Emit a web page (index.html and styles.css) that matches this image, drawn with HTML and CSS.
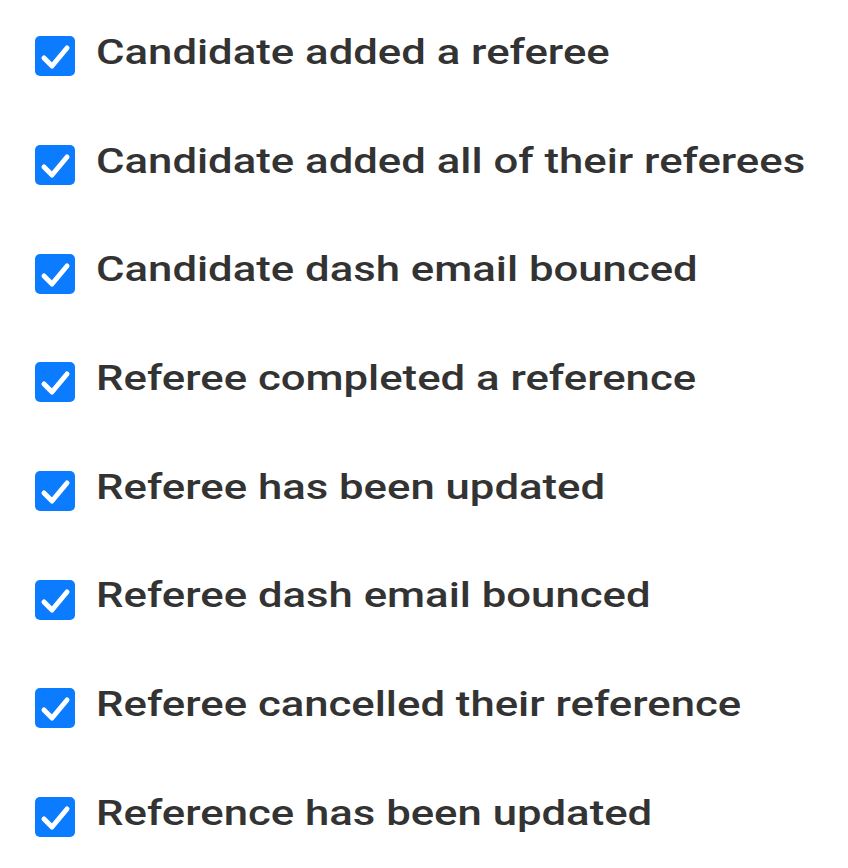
FILE: index.html
```html
<!DOCTYPE html>
<html lang="en">
  <head>
    <meta charset="UTF-8" />
    <title>Notification settings</title>
    <link rel="stylesheet" href="styles.css">
  </head>
  <body>
    <ul class="events">
      <li class="event">
        <span class="check"><svg viewBox="0 0 40 40"><path d="M9 22 L17 30 L32 12" /></svg></span>
        <span class="label">Candidate added a referee</span>
      </li>
      <li class="event">
        <span class="check"><svg viewBox="0 0 40 40"><path d="M9 22 L17 30 L32 12" /></svg></span>
        <span class="label">Candidate added all of their referees</span>
      </li>
      <li class="event">
        <span class="check"><svg viewBox="0 0 40 40"><path d="M9 22 L17 30 L32 12" /></svg></span>
        <span class="label">Candidate dash email bounced</span>
      </li>
      <li class="event">
        <span class="check"><svg viewBox="0 0 40 40"><path d="M9 22 L17 30 L32 12" /></svg></span>
        <span class="label">Referee completed a reference</span>
      </li>
      <li class="event">
        <span class="check"><svg viewBox="0 0 40 40"><path d="M9 22 L17 30 L32 12" /></svg></span>
        <span class="label">Referee has been updated</span>
      </li>
      <li class="event">
        <span class="check"><svg viewBox="0 0 40 40"><path d="M9 22 L17 30 L32 12" /></svg></span>
        <span class="label">Referee dash email bounced</span>
      </li>
      <li class="event">
        <span class="check"><svg viewBox="0 0 40 40"><path d="M9 22 L17 30 L32 12" /></svg></span>
        <span class="label">Referee cancelled their reference</span>
      </li>
      <li class="event">
        <span class="check"><svg viewBox="0 0 40 40"><path d="M9 22 L17 30 L32 12" /></svg></span>
        <span class="label">Reference has been updated</span>
      </li>
    </ul>
  </body>
</html>
```

FILE: styles.css
```css
body {
  margin: 0;
  background: #fff;
  font-family: Roboto, "Noto Sans", sans-serif;
}

.events {
  list-style: none;
  margin: 0;
  padding: 2px 0 0 35px;
}

.event {
  display: flex;
  align-items: center;
  height: 108.7px;
  gap: 21px;
}

.check {
  width: 40px;
  height: 40px;
  border-radius: 5px;
  background: #0b7bff;
  flex: none;
}

.check svg {
  display: block;
  width: 40px;
  height: 40px;
}

.check path {
  fill: none;
  stroke: #fff;
  stroke-width: 5;
  stroke-linecap: round;
  stroke-linejoin: round;
}

/* the source text is rendered wide */
.label {
  font-size: 35px;
  font-weight: 500;
  color: #333;
  margin-bottom: 8px;
  white-space: nowrap;
  transform: scaleX(1.248);
  transform-origin: left center;
}
```
